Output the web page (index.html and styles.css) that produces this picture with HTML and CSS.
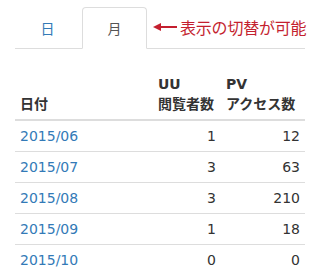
FILE: index.html
```html
<!DOCTYPE html>
<html lang="ja">
<head>
<meta charset="utf-8">
<link rel="stylesheet" href="styles.css">
</head>
<body>
<div class="page">
  <div class="tabbar">
    <ul class="tabs">
      <li class="tab"><a href="#">日</a></li>
      <li class="tab active"><a href="#">月</a></li>
    </ul>
    <div class="note">
      <svg class="arrow" width="24" height="8" viewBox="0 0 24 8"><path d="M0 4 L8 0 L8 8 Z" fill="#c41f2f"/><rect x="7" y="3" width="17" height="2" fill="#c41f2f"/></svg>
      <span class="note-text">表示の切替が可能</span>
    </div>
  </div>
  <table class="data">
    <thead>
      <tr>
        <th>日付</th>
        <th class="col-uu">UU<br>閲覧者数</th>
        <th class="col-pv">PV<br>アクセス数</th>
      </tr>
    </thead>
    <tbody>
      <tr><td><a href="#">2015/06</a></td><td class="r">1</td><td class="r">12</td></tr>
      <tr><td><a href="#">2015/07</a></td><td class="r">3</td><td class="r">63</td></tr>
      <tr><td><a href="#">2015/08</a></td><td class="r">3</td><td class="r">210</td></tr>
      <tr><td><a href="#">2015/09</a></td><td class="r">1</td><td class="r">18</td></tr>
      <tr><td><a href="#">2015/10</a></td><td class="r">0</td><td class="r">0</td></tr>
    </tbody>
  </table>
</div>
</body>
</html>
```
FILE: styles.css
```css
* { box-sizing: border-box; }
body {
  margin: 0;
  background: #fff;
  font-family: "DejaVu Sans", "Noto Sans CJK JP", sans-serif;
  font-size: 14px;
  line-height: 20px;
  color: #333;
}
.page { padding: 7px 15px 0; }
.tabbar {
  display: flex;
  align-items: center;
  border-bottom: 1px solid #ddd;
}
.tabs {
  display: flex;
  flex-shrink: 0;
  list-style: none;
  margin: 0 0 -1px;
  padding: 0;
  align-self: flex-end;
}
.tab { margin-right: 2px; }
.tab a {
  display: block;
  width: 65px;
  padding: 10px 0;
  text-align: center;
  text-decoration: none;
  color: #337ab7;
  border: 1px solid transparent;
  border-bottom: 0;
  border-radius: 4px 4px 0 0;
  font-family: "Noto Sans CJK JP", sans-serif;
}
.tab.active a {
  color: #555;
  background: #fff;
  border-color: #ddd;
  border-bottom: 1px solid #fff;
}
.note {
  display: flex;
  align-items: center;
  flex-shrink: 0;
  white-space: nowrap;
  margin-left: 4px;
  margin-bottom: 1px;
}
.arrow { display: block; flex-shrink: 0; }
.note-text {
  margin-left: 3px;
  color: #c41f2f;
  font-family: "Noto Sans CJK JP", sans-serif;
  font-size: 16px;
  letter-spacing: -0.2px;
}
.data {
  width: 100%;
  margin-top: 20px;
  border-collapse: collapse;
}
.data th, .data td {
  padding: 5px;
  border-top: 1px solid #ddd;
  vertical-align: top;
}
.data th {
  border-top: 0;
  border-bottom: 2px solid #ddd;
  text-align: left;
  vertical-align: bottom;
  font-weight: bold;
  white-space: nowrap;
}
.data th.col-uu { width: 68px; }
.data th.col-pv { width: 84px; }
.data td a { color: #337ab7; text-decoration: none; }
.data td.r { text-align: right; }
```
